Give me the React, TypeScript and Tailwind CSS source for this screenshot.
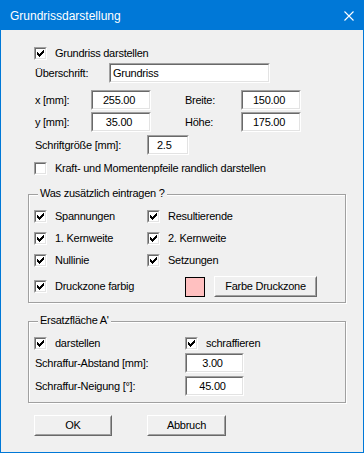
import { ReactNode } from 'react';

const font = { fontFamily: '"Liberation Sans", Arial, sans-serif', letterSpacing: '-0.25px' };

function Check({ checked = true }: { checked?: boolean }) {
  const cols = [2, 3, 4, 3, 2, 1, 0];
  return (
    <span className="flex w-[13px] h-[13px] shrink-0 border border-t-[#a0a0a0] border-l-[#a0a0a0] border-b-white border-r-white">
      <span className="flex flex-1 items-center justify-center bg-white border border-t-[#696969] border-l-[#696969] border-b-[#e3e3e3] border-r-[#e3e3e3]">
        {checked && (
          <svg width="7" height="7" viewBox="0 0 7 7" shapeRendering="crispEdges">
            {cols.map((y, x) => (
              <rect key={x} x={x} y={y} width="1" height="3" fill="#000" />
            ))}
          </svg>
        )}
      </span>
    </span>
  );
}

function CheckRow({ label, checked = true }: { label: string; checked?: boolean }) {
  return (
    <div className="flex items-center h-[13px]">
      <Check checked={checked} />
      <span className="ml-[8px] leading-[13px]">{label}</span>
    </div>
  );
}

function Field({ value, width, pad }: { value: string; width: number; pad?: number }) {
  return (
    <div
      className="h-[20px] shrink-0 flex border border-t-[#a0a0a0] border-l-[#a0a0a0] border-b-white border-r-white"
      style={{ width }}
    >
      <div
        className={
          'flex-1 flex items-center bg-white border border-t-[#696969] border-l-[#696969] border-b-[#e3e3e3] border-r-[#e3e3e3] ' +
          (pad === undefined ? 'justify-center pr-[4px]' : '')
        }
        style={pad === undefined ? undefined : { paddingLeft: pad }}
      >
        {value}
      </div>
    </div>
  );
}

function Button({ children, width }: { children: ReactNode; width: number }) {
  return (
    <div
      className="h-[21px] shrink-0 flex border border-t-white border-l-white border-b-[#696969] border-r-[#696969]"
      style={{ width }}
    >
      <div className="flex-1 flex items-center justify-center bg-[#f0f0f0] border border-t-[#f0f0f0] border-l-[#f0f0f0] border-b-[#a0a0a0] border-r-[#a0a0a0]">
        {children}
      </div>
    </div>
  );
}

function Group({ title, height, children }: { title: string; height: number; children: ReactNode }) {
  return (
    <div
      className="relative w-[318px] border border-[#a0a0a0] shadow-[1px_1px_0_white,inset_1px_1px_0_white]"
      style={{ height }}
    >
      <span className="absolute left-[9px] top-[-8px] px-[2px] bg-[#f0f0f0] leading-[13px]">{title}</span>
      {children}
    </div>
  );
}

export default function App() {
  return (
    <div className="w-[364px] h-[453px] flex flex-col border border-[#0078d7] bg-[#f0f0f0] text-[11px] text-black" style={font}>
      <div className="h-[29px] shrink-0 flex items-center justify-between bg-[#0078d7] text-white pl-[9px] pr-[9px]">
        <span className="text-[12px] tracking-normal">Grundrissdarstellung</span>
        <svg width="10" height="10" viewBox="0 0 10 10">
          <path d="M0.5 0.5 L9.5 9.5 M9.5 0.5 L0.5 9.5" stroke="white" strokeWidth="1.1" />
        </svg>
      </div>

      <div className="flex flex-col pl-[27px]">
        <div className="mt-[17px] pl-[6px]">
          <CheckRow label="Grundriss darstellen" />
        </div>

        <div className="mt-[3px] pl-[7px] flex items-center h-[20px]">
          <span className="w-[74px]">Überschrift:</span>
          <Field value="Grundriss" width={161} pad={2} />
        </div>

        <div className="mt-[7px] pl-[7px] flex items-center h-[20px]">
          <span className="w-[56px]">x [mm]:</span>
          <Field value="255.00" width={60} />
          <span className="ml-[34px] w-[56px]">Breite:</span>
          <Field value="150.00" width={60} />
        </div>

        <div className="mt-[2px] pl-[7px] flex items-center h-[20px]">
          <span className="w-[56px]">y [mm]:</span>
          <Field value="35.00" width={60} />
          <span className="ml-[34px] w-[56px]">Höhe:</span>
          <Field value="175.00" width={60} />
        </div>

        <div className="mt-[3px] pl-[7px] flex items-center h-[20px]">
          <span className="w-[112px]">Schriftgröße [mm]:</span>
          <Field value="2.5" width={42} pad={8} />
        </div>

        <div className="mt-[7px] pl-[6px]">
          <CheckRow label="Kraft- und Momentenpfeile randlich darstellen" checked={false} />
        </div>

        <div className="mt-[19px]">
          <Group title="Was zusätzlich eintragen ?" height={109}>
            <div className="flex flex-col pl-[5px]">
              <div className="mt-[15px] grid grid-cols-[113px_1fr]">
                <CheckRow label="Spannungen" />
                <CheckRow label="Resultierende" />
              </div>
              <div className="mt-[9px] grid grid-cols-[113px_1fr]">
                <CheckRow label="1. Kernweite" />
                <CheckRow label="2. Kernweite" />
              </div>
              <div className="mt-[9px] grid grid-cols-[113px_1fr]">
                <CheckRow label="Nullinie" />
                <CheckRow label="Setzungen" />
              </div>
              <div className="mt-[9px] flex items-center h-[21px]">
                <div className="w-[151px]">
                  <CheckRow label="Druckzone farbig" />
                </div>
                <div className="w-[20px] h-[20px] border border-black bg-[#ffc0c0]" />
                <div className="ml-[9px]">
                  <Button width={103}>Farbe Druckzone</Button>
                </div>
              </div>
            </div>
          </Group>
        </div>

        <div className="mt-[18px]">
          <Group title="Ersatzfläche A'" height={82}>
            <div className="flex flex-col pl-[5px]">
              <div className="mt-[15px] grid grid-cols-[151px_1fr]">
                <CheckRow label="darstellen" />
                <CheckRow label="schraffieren" />
              </div>
              <div className="mt-[3px] pl-[1px] flex items-center h-[20px]">
                <span className="w-[150px]">Schraffur-Abstand [mm]:</span>
                <Field value="3.00" width={59} />
              </div>
              <div className="mt-[3px] pl-[1px] flex items-center h-[20px]">
                <span className="w-[150px]">Schraffur-Neigung [°]:</span>
                <Field value="45.00" width={59} />
              </div>
            </div>
          </Group>
        </div>

        <div className="mt-[12px] pl-[6px] flex">
          <Button width={78}>OK</Button>
          <div className="ml-[35px]">
            <Button width={79}>Abbruch</Button>
          </div>
        </div>
      </div>
    </div>
  );
}
